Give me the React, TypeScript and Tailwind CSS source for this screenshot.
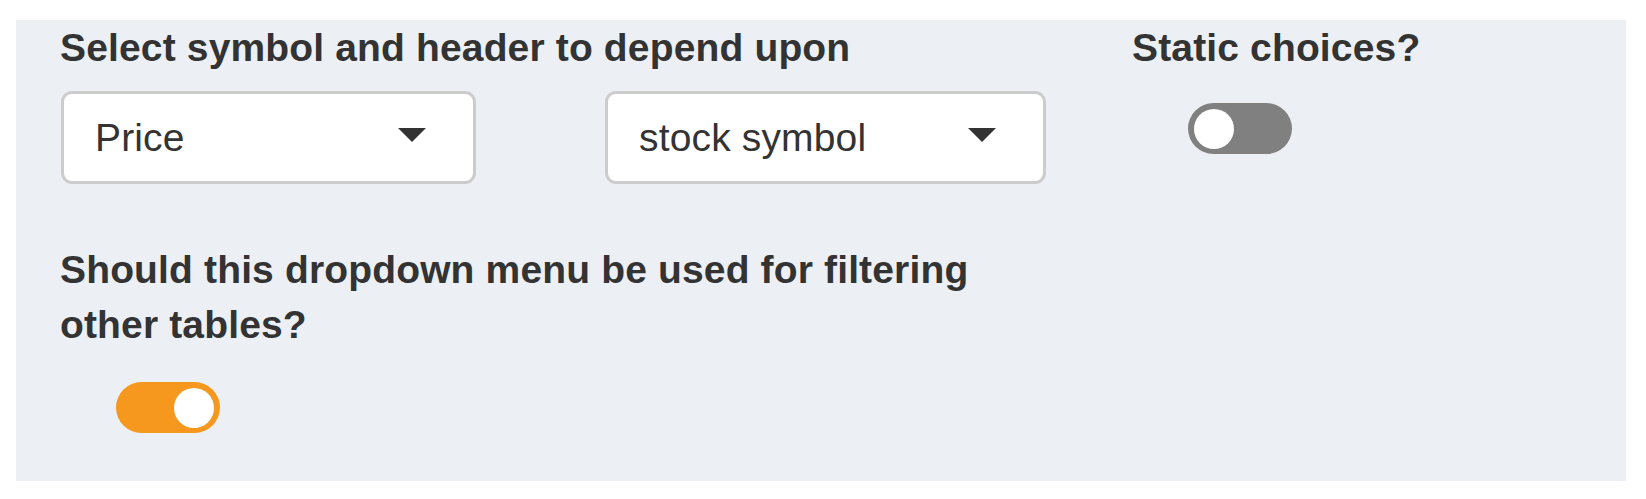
import React, { useState } from 'react';

const font = { fontFamily: '"Liberation Sans", Arial, Helvetica, sans-serif' };

function Dropdown({ value, width }: { value: string; width: string }) {
    return (
        <div className={`${width} h-[93px] bg-white border-[3px] border-[#cccccc] rounded-[11px] flex items-center justify-between pl-[31px] pr-[47px]`}>
            <span className="text-[39px] leading-[55px] tracking-[0.15px] text-[#333333]">{value}</span>
            <span className="mb-[5px] w-0 h-0 border-l-[14px] border-r-[14px] border-t-[14px] border-l-transparent border-r-transparent border-t-[#333333]" />
        </div>
    );
}

function Toggle({ on, onClick }: { on: boolean; onClick: () => void }) {
    return (
        <button
            onClick={onClick}
            className={`relative w-[104px] h-[51px] rounded-full ${on ? 'bg-[#f5981d]' : 'bg-[#808080]'}`}
        >
            <span
                className={`absolute top-[5.5px] w-[40px] h-[40px] rounded-full bg-white ${on ? 'right-[6px]' : 'left-[6px]'}`}
            />
        </button>
    );
}

export default function App() {
    const [staticChoices, setStaticChoices] = useState(false);
    const [filterTables, setFilterTables] = useState(true);

    return (
        <div className="w-[1646px] h-[499px] bg-white pt-[20px] pl-[16px]" style={font}>
            <div className="w-[1610px] h-[461px] bg-[#ecf0f5] flex text-[#333333]">
                <div className="w-[1030px] pl-[44px]">
                    <div className="text-[39px] leading-[55px] tracking-[0.15px] font-bold whitespace-nowrap">
                        Select symbol and header to depend upon
                    </div>
                    <div className="flex mt-[16px] ml-[1px] gap-[129px]">
                        <Dropdown value="Price" width="w-[415px]" />
                        <Dropdown value="stock symbol" width="w-[441px]" />
                    </div>
                    <div className="mt-[58px] w-[986px] text-[39px] leading-[55px] tracking-[0.15px] font-bold">
                        Should this dropdown menu be used for filtering other tables?
                    </div>
                    <div className="mt-[30px] ml-[56px]">
                        <Toggle on={filterTables} onClick={() => setFilterTables(!filterTables)} />
                    </div>
                </div>
                <div className="pl-[86px]">
                    <div className="text-[39px] leading-[55px] tracking-[0.15px] font-bold whitespace-nowrap">Static choices?</div>
                    <div className="mt-[28px] ml-[56px]">
                        <Toggle on={staticChoices} onClick={() => setStaticChoices(!staticChoices)} />
                    </div>
                </div>
            </div>
        </div>
    );
}
